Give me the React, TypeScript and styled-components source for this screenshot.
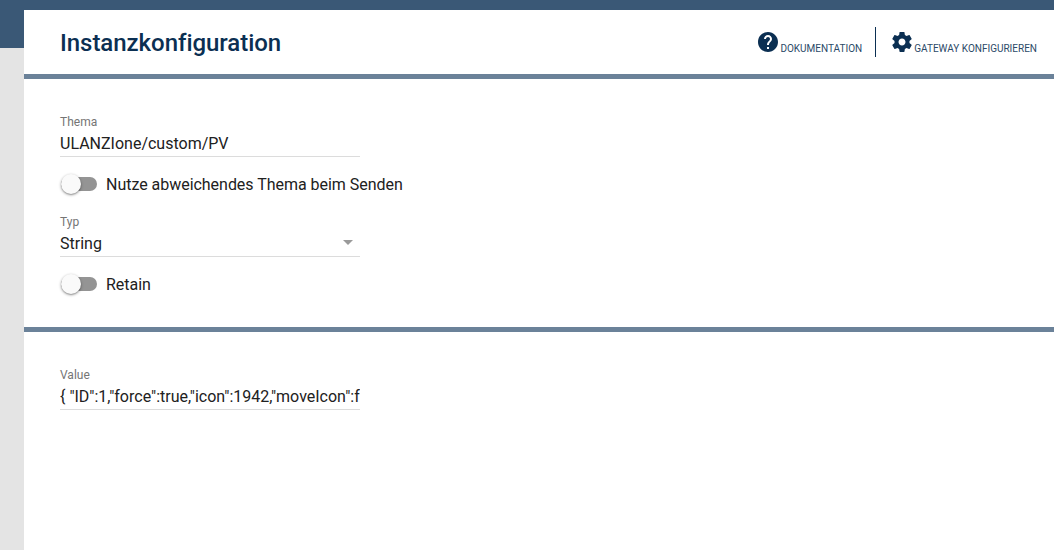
import styled, { createGlobalStyle } from "styled-components";

const GlobalStyle = createGlobalStyle`
  html, body {
    margin: 0;
    height: 100%;
    overflow: hidden;
    background: #fff;
    font-family: Roboto, "Liberation Sans", sans-serif;
  }
`;

const Page = styled.div`
  height: 550px;
  display: flex;
  flex-direction: column;
`;

const TopBar = styled.div`
  height: 10px;
  flex-shrink: 0;
  background: #3a5876;
`;

const Body = styled.div`
  flex: 1;
  display: flex;
`;

const Sidebar = styled.div`
  width: 24px;
  flex-shrink: 0;
  background: linear-gradient(#3a5876 38px, #e4e4e4 38px);
`;

const Main = styled.div`
  flex: 1;
  display: flex;
  flex-direction: column;
`;

const Header = styled.header`
  height: 64px;
  display: flex;
  align-items: center;
  justify-content: space-between;
  padding: 0 17px 0 36px;
  border-bottom: 5px solid #6b8299;
`;

const Title = styled.h1`
  margin: 2px 0 0;
  font-size: 24px;
  font-weight: 500;
  letter-spacing: -0.04px;
  color: #0b2f52;
`;

const Actions = styled.div`
  display: flex;
  align-items: center;
`;

const Action = styled.a<{ $divided?: boolean }>`
  display: flex;
  align-items: flex-end;
  height: 30px;
  box-sizing: border-box;
  padding-bottom: 3px;
  font-size: 10px;
  color: #2c4a68;
  ${(p) =>
    p.$divided &&
    `
    margin-left: 13px;
    padding-left: 14px;
    border-left: 1px solid #0b2f52;
  `}

  svg {
    width: 24px;
    height: 24px;
    fill: #0b2f52;
  }
  span {
    line-height: 12px;
    margin-bottom: -1px;
  }
`;

const Section = styled.section<{ $height: number; $top: number }>`
  height: ${(p) => p.$height}px;
  padding: ${(p) => p.$top}px 0 0 36px;
  box-sizing: border-box;
`;

const SectionRule = styled.div`
  height: 5px;
  background: #6b8299;
`;

const Field = styled.div`
  position: relative;
  width: 300px;
  height: 42px;
  box-sizing: border-box;
  border-bottom: 1px solid #dcdcdc;
`;

const FieldLabel = styled.div`
  font-size: 12px;
  line-height: 14px;
  color: #757575;
`;

const FieldValue = styled.div`
  font-size: 16px;
  line-height: 19px;
  margin-top: 5px;
  color: #212121;
  white-space: nowrap;
  overflow: hidden;
`;

const Caret = styled.span`
  position: absolute;
  right: 7px;
  bottom: 11px;
  border-left: 5px solid transparent;
  border-right: 5px solid transparent;
  border-top: 5px solid #9a9a9a;
`;

const ToggleRow = styled.div`
  display: flex;
  align-items: center;
  height: 24px;
  margin: 15px 0 19px;
  font-size: 16px;
  letter-spacing: -0.03px;
  color: #212121;
`;

const Toggle = styled.span`
  position: relative;
  width: 36px;
  height: 14px;
  margin: 0 9px 0 1px;
  border-radius: 7px;
  background: #949494;
`;

const Thumb = styled.span`
  position: absolute;
  left: 0;
  top: -3px;
  width: 20px;
  height: 20px;
  border-radius: 50%;
  background: #fafafa;
  box-shadow: 0 1px 3px rgba(0, 0, 0, 0.4), 0 1px 1px rgba(0, 0, 0, 0.14);
`;

const App = () => {
  return (
    <Page>
      <GlobalStyle />
      <TopBar />
      <Body>
        <Sidebar />
        <Main>
          <Header>
            <Title>Instanzkonfiguration</Title>
            <Actions>
              <Action>
                <svg viewBox="0 0 24 24">
                  <path d="M12 2C6.48 2 2 6.48 2 12s4.48 10 10 10 10-4.48 10-10S17.52 2 12 2zm1 17h-2v-2h2v2zm2.07-7.75l-.9.92C13.45 12.9 13 13.5 13 15h-2v-.5c0-1.1.45-2.1 1.17-2.83l1.24-1.26c.37-.36.59-.86.59-1.41 0-1.1-.9-2-2-2s-2 .9-2 2H8c0-2.21 1.79-4 4-4s4 1.79 4 4c0 .88-.36 1.68-.93 2.25z" />
                </svg>
                <span>DOKUMENTATION</span>
              </Action>
              <Action $divided>
                <svg viewBox="0 0 24 24">
                  <path d="M19.43 12.98c.04-.32.07-.64.07-.98s-.03-.66-.07-.98l2.11-1.65c.19-.15.24-.42.12-.64l-2-3.46c-.12-.22-.39-.3-.61-.22l-2.49 1c-.52-.4-1.08-.73-1.69-.98l-.38-2.65C14.46 2.18 14.25 2 14 2h-4c-.25 0-.46.18-.49.42l-.38 2.65c-.61.25-1.17.59-1.69.98l-2.49-1c-.23-.09-.49 0-.61.22l-2 3.46c-.13.22-.07.49.12.64l2.11 1.65c-.04.32-.07.65-.07.98s.03.66.07.98l-2.11 1.65c-.19.15-.24.42-.12.64l2 3.46c.12.22.39.3.61.22l2.49-1c.52.4 1.08.73 1.69.98l.38 2.65c.03.24.24.42.49.42h4c.25 0 .46-.18.49-.42l.38-2.65c.61-.25 1.17-.59 1.69-.98l2.49 1c.23.09.49 0 .61-.22l2-3.46c.12-.22.07-.49-.12-.64l-2.11-1.65zM12 15.5c-1.93 0-3.5-1.57-3.5-3.5s1.57-3.5 3.5-3.5 3.5 1.57 3.5 3.5-1.57 3.5-3.5 3.5z" />
                </svg>
                <span>GATEWAY KONFIGURIEREN</span>
              </Action>
            </Actions>
          </Header>
          <Section $height={248} $top={36}>
            <Field>
              <FieldLabel>Thema</FieldLabel>
              <FieldValue>ULANZIone/custom/PV</FieldValue>
            </Field>
            <ToggleRow>
              <Toggle>
                <Thumb />
              </Toggle>
              Nutze abweichendes Thema beim Senden
            </ToggleRow>
            <Field>
              <FieldLabel>Typ</FieldLabel>
              <FieldValue>String</FieldValue>
              <Caret />
            </Field>
            <ToggleRow>
              <Toggle>
                <Thumb />
              </Toggle>
              Retain
            </ToggleRow>
          </Section>
          <SectionRule />
          <Section $height={218} $top={36}>
            <Field>
              <FieldLabel>Value</FieldLabel>
              <FieldValue>{'{ "ID":1,"force":true,"icon":1942,"moveIcon":f'}</FieldValue>
            </Field>
          </Section>
        </Main>
      </Body>
    </Page>
  );
};

export default App;
